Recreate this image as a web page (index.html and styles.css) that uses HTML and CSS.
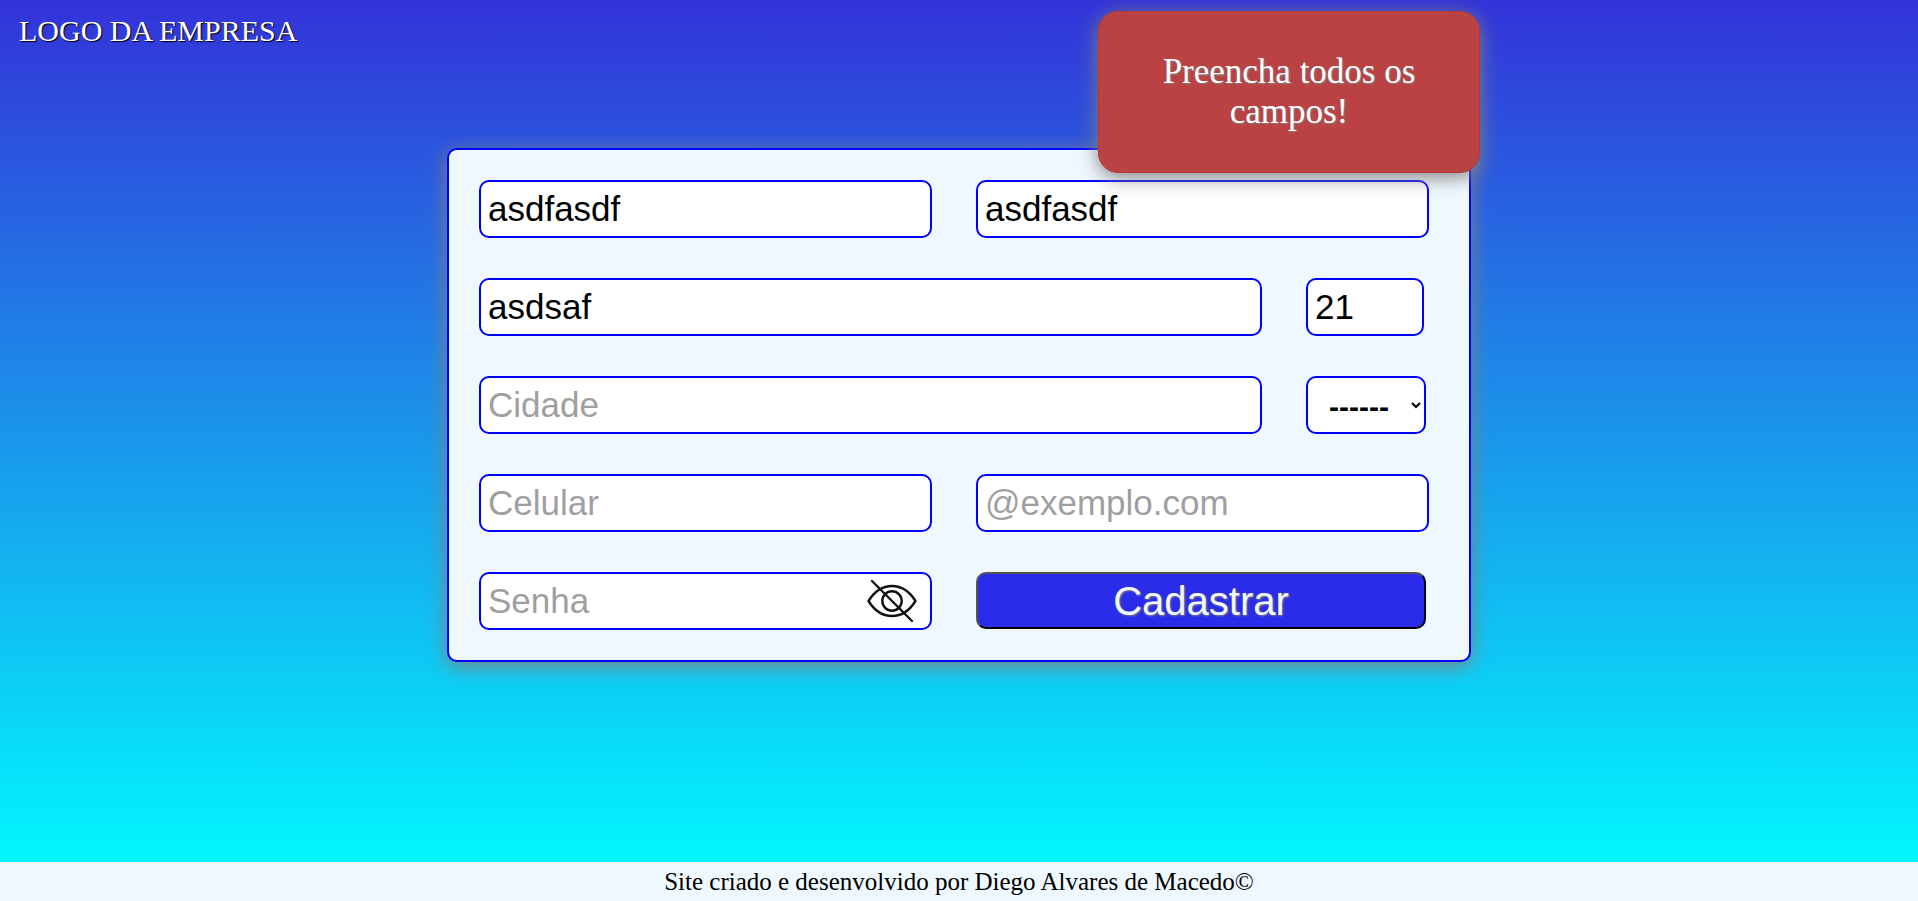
FILE: index.html
```html
<!DOCTYPE html>
<html lang="pt-BR">
<head>
<meta charset="utf-8">
<meta name="viewport" content="width=device-width, initial-scale=1">
<title>Cadastro</title>
<link rel="stylesheet" href="styles.css">
</head>
<body>
<header class="header">LOGO DA EMPRESA</header>
<div class="toast" role="alert">Preencha todos os campos!</div>
<main class="main">
  <form class="card" novalidate>
    <div class="row halves">
      <input class="field" type="text" aria-label="Nome" value="asdfasdf">
      <input class="field" type="text" aria-label="Sobrenome" value="asdfasdf">
    </div>
    <div class="row wide-short">
      <input class="field" type="text" aria-label="Endereço" value="asdsaf">
      <input class="field number" type="text" inputmode="numeric" aria-label="Número" value="21">
    </div>
    <div class="row wide-short">
      <input class="field" type="text" aria-label="Cidade" placeholder="Cidade">
      <select class="field state" aria-label="Estado"><option>------</option></select>
    </div>
    <div class="row halves">
      <input class="field" type="tel" aria-label="Celular" placeholder="Celular">
      <input class="field" type="email" aria-label="E-mail" placeholder="@exemplo.com">
    </div>
    <div class="row halves">
      <div class="password">
        <input class="field" type="password" aria-label="Senha" placeholder="Senha">
        <button class="eye" type="button" aria-label="Mostrar senha">
          <svg viewBox="0 0 50 44" width="50" height="44" fill="none" stroke="#111" stroke-width="2.4" stroke-linecap="round" stroke-linejoin="round">
            <path d="M1.5 22C14 2 36 2 48.500 22C36 42 14 42 1.500 22Z"/>
            <circle cx="25" cy="22" r="9.700"/>
            <path d="M5 2L45 42"/>
          </svg>
        </button>
      </div>
      <button class="submit" type="button">Cadastrar</button>
    </div>
  </form>
</main>
<footer class="footer">Site criado e desenvolvido por Diego Alvares de Macedo©</footer>
</body>
</html>
```

FILE: styles.css
```css
* { box-sizing: border-box; }

body {
  margin: 0;
  min-height: 100vh;
  display: flex;
  flex-direction: column;
  font-family: "Liberation Serif", "Times New Roman", serif;
  background: linear-gradient(to bottom, #3333d8, #00ffff);
}

.header {
  padding: 14px 19px;
  font-size: 30px;
  line-height: 34px;
  color: #fff;
  text-shadow: 1px 1px 1px #000;
}

.toast {
  position: absolute;
  top: 11px;
  left: 1098px;
  width: 382px;
  padding: 40px 50px;
  border: 1px solid #b23a3a;
  border-radius: 20px;
  background: #ba4242;
  box-shadow: 0 4px 20px #808080;
  color: #fff;
  font-size: 35px;
  line-height: 40px;
  text-align: center;
  text-shadow: 1px 1px 2px #808080;
}

.main {
  flex: 1;
  padding: 86px 20px 20px;
}

.card {
  max-width: 1024px;
  margin: 0 auto;
  padding: 30px 40px 30px 30px;
  display: flex;
  flex-direction: column;
  gap: 40px;
  border: 2px solid #00f;
  border-radius: 10px;
  background: aliceblue;
  box-shadow: 0 4px 20px #808080;
}

.row {
  display: grid;
  align-items: start;
  gap: 44px;
}

.halves { grid-template-columns: minmax(0, 1fr) minmax(0, 1fr); }
.wide-short { grid-template-columns: minmax(0, 1fr) 123px; }

.field {
  width: 100%;
  height: 58px;
  padding: 7px;
  border: 2px solid #00f;
  border-radius: 10px;
  background: #fff;
  color: #000;
  font-family: "Liberation Sans", Arial, sans-serif;
  font-size: 35px;
}

.field::placeholder { color: #9f9f9f; opacity: 1; }

.number { width: 118px; }

.state {
  width: 120px;
  padding: 2px 0 0 17px;
  font-size: 30px;
  font-weight: 700;
}

.password { position: relative; }
.password .field { padding-right: 70px; }

.eye {
  position: absolute;
  top: 7px;
  right: 15px;
  padding: 0;
  border: 0;
  background: none;
  line-height: 0;
}

.submit {
  height: 57px;
  margin-right: 3px;
  padding: 0;
  border: 2px outset #000;
  border-radius: 10px;
  background: #2b2bea;
  color: aliceblue;
  font-family: "Liberation Sans", Arial, sans-serif;
  font-size: 40px;
  line-height: 46px;
  text-shadow: 1px 1px 2px #808080;
}

.footer {
  padding: 5px;
  background: aliceblue;
  color: #000;
  font-size: 25px;
  line-height: 29px;
  text-align: center;
}
```
